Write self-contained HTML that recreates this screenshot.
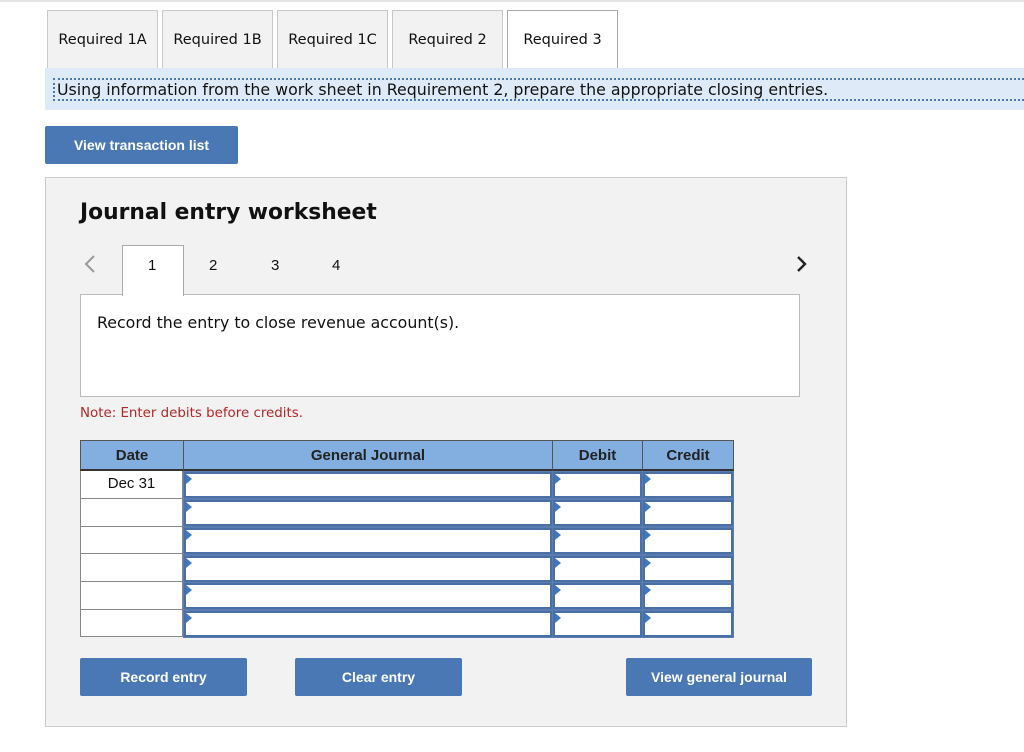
<!DOCTYPE html>
<html><head><meta charset="utf-8"><style>
*{box-sizing:border-box;margin:0;padding:0}
body{width:1024px;height:752px;background:#fff;position:relative;overflow:hidden;font-family:"DejaVu Sans","Liberation Sans",sans-serif;color:#111}
.a{position:absolute}
.tab{position:absolute;top:10px;height:58px;background:#f2f2f2;border:1px solid #c8c8c8;border-bottom:none;font-size:14.5px;line-height:58px;text-align:center}
.btn{position:absolute;background:#4a78b5;color:#fff;font-family:"Liberation Sans",sans-serif;font-weight:bold;font-size:14px;text-align:center;border-radius:2px}
.c{position:absolute;border:2px solid #4a6fa5;background:#fff}
.c:before{content:"";position:absolute;left:0;top:0;border-left:6px solid #3e78c4;border-top:5px solid transparent;border-bottom:5px solid transparent}
.d{position:absolute;left:80px;width:103px;background:#fff;border:1px solid #888;border-top:none;font-family:"Liberation Sans",sans-serif;font-size:15px;text-align:center;line-height:26px}
.h{position:absolute;top:440px;height:31px;background:#83aee0;border:1px solid #555;border-bottom:2px solid #333;font-family:"Liberation Sans",sans-serif;font-weight:bold;font-size:15px;text-align:center;line-height:29px;color:#222}
</style></head><body>
<div class="a" style="left:0;top:0;width:1024px;height:2px;background:#e4e4e4"></div>
<div class="tab" style="left:47px;width:111px">Required 1A</div>
<div class="tab" style="left:162px;width:111px">Required 1B</div>
<div class="tab" style="left:277px;width:111px">Required 1C</div>
<div class="tab" style="left:392px;width:111px">Required 2</div>
<div class="tab" style="left:507px;width:111px;background:#fff;border-color:#aaa;height:59px">Required 3</div>
<div class="a" style="left:45px;top:68px;width:979px;height:42px;background:#deeaf7"></div>
<div class="a" style="left:53px;top:78px;width:975px;height:23px;border:2px dotted #4a78b5;font-size:15.8px;line-height:20px;padding-left:2px;white-space:nowrap">Using information from the work sheet in Requirement 2, prepare the appropriate closing entries.</div>
<div class="btn" style="left:45px;top:126px;width:193px;height:38px;line-height:38px">View transaction list</div>
<div class="a" style="left:45px;top:177px;width:802px;height:550px;background:#f2f2f2;border:1px solid #ccc"></div>
<div class="a" style="left:80px;top:200px;font-size:21.8px;font-weight:bold">Journal entry worksheet</div>
<svg class="a" style="left:82px;top:254px" width="16" height="20"><path d="M12 2 L4 10 L12 18" stroke="#999" stroke-width="2" fill="none"/></svg>
<svg class="a" style="left:794px;top:254px" width="16" height="20"><path d="M4 3 L11 10 L4 17" stroke="#222" stroke-width="2.4" fill="none"/></svg>
<div class="a" style="left:80px;top:294px;width:720px;height:103px;background:#fff;border:1px solid #bbb"></div>
<div class="a" style="left:122px;top:245px;width:62px;height:51px;background:#fff;border:1px solid #aaa;border-bottom:none"></div>
<div class="a" style="left:148px;top:257px;font-size:15px;font-family:'Liberation Sans',sans-serif">1</div>
<div class="a" style="left:209px;top:257px;font-size:15px;font-family:'Liberation Sans',sans-serif">2</div>
<div class="a" style="left:271px;top:257px;font-size:15px;font-family:'Liberation Sans',sans-serif">3</div>
<div class="a" style="left:332px;top:257px;font-size:15px;font-family:'Liberation Sans',sans-serif">4</div>
<div class="a" style="left:97px;top:313px;font-size:15.8px">Record the entry to close revenue account(s).</div>
<div class="a" style="left:80px;top:406px;font-size:13.4px;color:#b0282a">Note: Enter debits before credits.</div>
<div class="h" style="left:80px;width:104px">Date</div>
<div class="h" style="left:183px;width:370px">General Journal</div>
<div class="h" style="left:552px;width:91px">Debit</div>
<div class="h" style="left:642px;width:92px">Credit</div>
<div class="d" style="top:471px;height:28px">Dec 31</div>
<div class="d" style="top:499px;height:28px"></div>
<div class="d" style="top:527px;height:27px"></div>
<div class="d" style="top:554px;height:28px"></div>
<div class="d" style="top:582px;height:28px"></div>
<div class="d" style="top:610px;height:27px"></div>
<div class="a" style="left:183px;top:471px;width:551px;height:167px;background:#5a7cb0"></div>
<div class="c" style="left:184px;top:472px;width:368px;height:26px"></div><div class="c" style="left:553px;top:472px;width:89px;height:26px"></div><div class="c" style="left:643px;top:472px;width:90px;height:26px"></div>
<div class="c" style="left:184px;top:500px;width:368px;height:26px"></div><div class="c" style="left:553px;top:500px;width:89px;height:26px"></div><div class="c" style="left:643px;top:500px;width:90px;height:26px"></div>
<div class="c" style="left:184px;top:528px;width:368px;height:26px"></div><div class="c" style="left:553px;top:528px;width:89px;height:26px"></div><div class="c" style="left:643px;top:528px;width:90px;height:26px"></div>
<div class="c" style="left:184px;top:556px;width:368px;height:26px"></div><div class="c" style="left:553px;top:556px;width:89px;height:26px"></div><div class="c" style="left:643px;top:556px;width:90px;height:26px"></div>
<div class="c" style="left:184px;top:583px;width:368px;height:26px"></div><div class="c" style="left:553px;top:583px;width:89px;height:26px"></div><div class="c" style="left:643px;top:583px;width:90px;height:26px"></div>
<div class="c" style="left:184px;top:611px;width:368px;height:26px"></div><div class="c" style="left:553px;top:611px;width:89px;height:26px"></div><div class="c" style="left:643px;top:611px;width:90px;height:26px"></div>
<div class="btn" style="left:80px;top:658px;width:167px;height:38px;line-height:38px">Record entry</div>
<div class="btn" style="left:295px;top:658px;width:167px;height:38px;line-height:38px">Clear entry</div>
<div class="btn" style="left:626px;top:658px;width:186px;height:38px;line-height:38px">View general journal</div>
</body></html>
